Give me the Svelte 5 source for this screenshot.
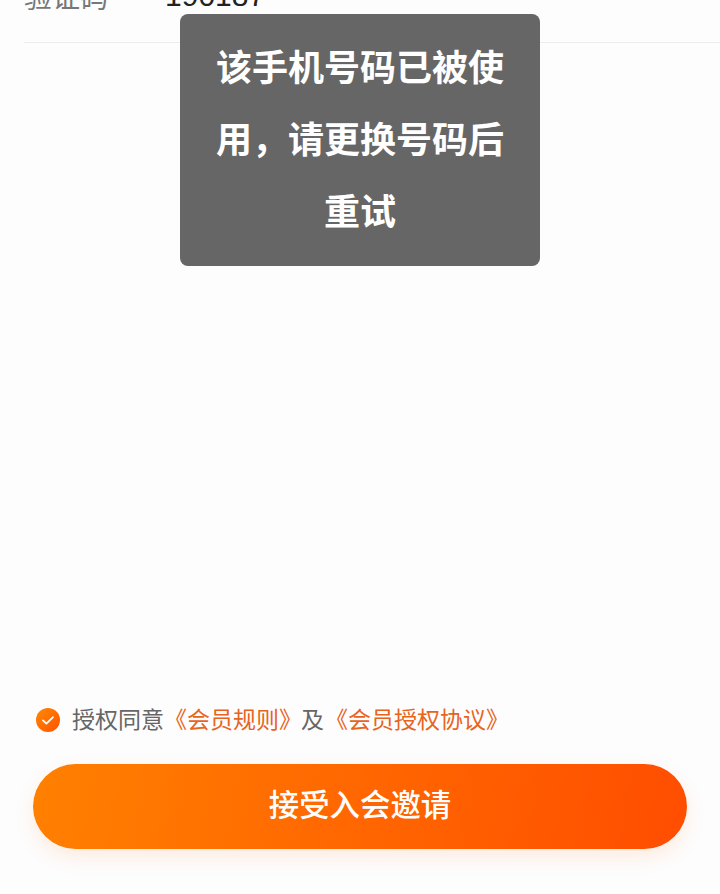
<script>
  let agreed = true;
</script>

<div class="page">
  <div class="field">
    <span class="label">验证码</span>
    <span class="value">190187</span>
  </div>

  <div class="spacer"></div>

  <div class="agree">
    <svg class="check" viewBox="0 0 24 24" width="24" height="24" aria-hidden="true">
      <defs>
        <linearGradient id="chk" x1="0" y1="0" x2="1" y2="1">
          <stop offset="0" stop-color="#ff8a00" />
          <stop offset="1" stop-color="#ff5200" />
        </linearGradient>
      </defs>
      <circle cx="12" cy="12" r="12" fill="url(#chk)" />
      {#if agreed}
        <path d="M7 12.4l3.4 3.2 6.6-6.4" fill="none" stroke="#fff" stroke-width="1.8" stroke-linecap="round" stroke-linejoin="round" />
      {/if}
    </svg>
    <span class="text">授权同意</span>
    <span class="link">《会员规则》</span>
    <span class="text and">及</span>
    <span class="link">《会员授权协议》</span>
  </div>

  <button class="accept"><span>接受入会邀请</span></button>

  <div class="toast">该手机号码已被使用，请更换号码后重试</div>
</div>

<style>
  :global(body) {
    margin: 0;
    background: #fff;
  }

  .page {
    position: relative;
    height: 894px;
    overflow: hidden;
    display: flex;
    flex-direction: column;
    background: #fdfdfd;
    font-family: "Liberation Sans", "Noto Sans CJK SC", sans-serif;
  }

  .field {
    display: flex;
    align-items: center;
    gap: 57px;
    height: 80px;
    margin: -37px 0 0 24px;
    padding-bottom: 13px;
    border-bottom: 1px solid #ececec;
    box-sizing: border-box;
    flex: none;
  }

  .label {
    font-size: 28px;
    color: #777;
  }

  .value {
    font-size: 30px;
    color: #222;
  }

  .spacer {
    flex: 1;
  }

  .agree {
    display: flex;
    align-items: center;
    height: 40px;
    margin: 0 0 26px 36px;
    font-size: 23px;
    white-space: nowrap;
  }

  .check {
    flex: none;
    margin: 4px 12px 0 0;
  }

  .text {
    color: #666;
  }

  .link {
    color: #e8641e;
  }

  .and {
    margin: 0 1px 0 -1px;
  }

  .accept {
    flex: none;
    height: 85px;
    margin: 0 33px 45px;
    padding: 0 0 7px;
    border: none;
    border-radius: 43px;
    background: linear-gradient(100deg, #ff8000, #ff4d00);
    box-shadow: 0 8px 20px rgba(255, 110, 0, 0.12);
    color: #fff;
    font-family: inherit;
    font-size: 30.4px;
    font-weight: 500;
  }

  .toast {
    position: absolute;
    top: 14px;
    left: 180px;
    width: 360px;
    padding: 19px 36px 17px;
    box-sizing: border-box;
    border-radius: 8px;
    background: #666;
    color: #fff;
    font-size: 36px;
    font-weight: 700;
    line-height: 72px;
    text-align: center;
  }
</style>
